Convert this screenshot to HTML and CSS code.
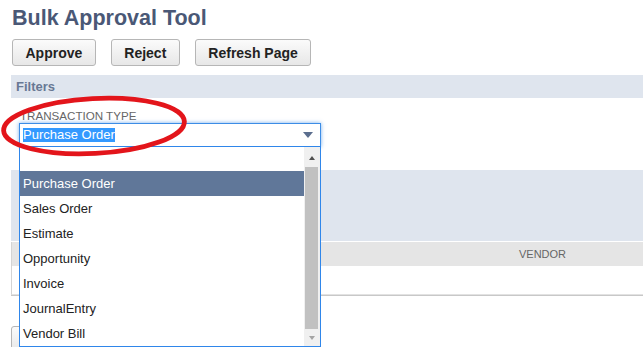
FILE: index.html
```html
<!DOCTYPE html>
<html lang="en">
<head>
<meta charset="utf-8">
<title>Bulk Approval Tool</title>
<link rel="stylesheet" href="styles.css">
</head>
<body>
<div class="page">
  <h1 class="title">Bulk Approval Tool</h1>
  <div class="actions">
    <button class="btn">Approve</button>
    <button class="btn">Reject</button>
    <button class="btn">Refresh Page</button>
  </div>
  <div class="section-bar">Filters</div>
  <div class="filters">
    <div class="field">
      <label class="field-label">Transaction Type</label>
      <div class="select">
        <span class="select-value">Purchase Order</span>
        <span class="select-arrow"></span>
        <div class="dropdown">
          <div class="options">
            <div class="option blank"></div>
            <div class="option active">Purchase Order</div>
            <div class="option">Sales Order</div>
            <div class="option">Estimate</div>
            <div class="option">Opportunity</div>
            <div class="option">Invoice</div>
            <div class="option">JournalEntry</div>
            <div class="option">Vendor Bill</div>
          </div>
          <div class="scrollbar">
            <div class="sb-btn sb-up"></div>
            <div class="sb-thumb"></div>
            <div class="sb-btn sb-down"></div>
          </div>
        </div>
      </div>
    </div>
  </div>
  <div class="sublist-bar"></div>
  <div class="table">
    <div class="thead">
      <div class="th th-vendor">VENDOR</div>
    </div>
    <div class="trow"></div>
  </div>
  <div class="bottom-actions">
    <button class="btn btn-hidden-label" aria-label="Approve"></button>
  </div>
</div>
<svg class="annotation" width="643" height="347" viewBox="0 0 643 347">
  <ellipse cx="94" cy="126" rx="90.5" ry="27.5" transform="rotate(-3 94 126)" fill="none" stroke="#e3151b" stroke-width="4.8"/>
</svg>
</body>
</html>
```

FILE: styles.css
```css
* { box-sizing: border-box; }

body {
  margin: 0;
  font-family: "Liberation Sans", Arial, sans-serif;
  color: #222;
  background: #fff;
  overflow: hidden;
}

.page {
  padding-left: 11px;
}

.title {
  margin: 6px 0 0 1px;
  font-size: 21.5px;
  line-height: 24px;
  font-weight: bold;
  color: #4a5876;
}

.actions {
  display: flex;
  gap: 15px;
  margin-top: 9px;
  padding-left: 1px;
}

.btn {
  height: 27px;
  padding: 0 12.5px;
  font-family: "Liberation Sans", Arial, sans-serif;
  font-size: 14px;
  font-weight: bold;
  color: #222;
  border: 1px solid #b6b6b6;
  border-radius: 3px;
  background: linear-gradient(#fbfbfb, #e7e7e7);
}

.btn-hidden-label {
  width: 84px;
}

.section-bar {
  margin-top: 9px;
  height: 23px;
  line-height: 23px;
  padding-left: 5px;
  background: #dfe5ee;
  font-size: 13px;
  font-weight: bold;
  color: #687894;
}

.filters {
  height: 72px;
  padding: 11px 0 0 8px;
}

.field-label {
  display: block;
  padding-left: 1px;
  font-size: 11.6px;
  line-height: 14px;
  color: #666;
  text-transform: uppercase;
}

.select {
  position: relative;
  width: 302px;
  height: 24px;
  display: flex;
  align-items: center;
  padding-left: 3px;
  border: 1px solid #3d8de6;
  box-shadow: 0 0 4px rgba(61, 141, 230, 0.7);
  background: #fff;
}

.select-value {
  font-size: 13px;
  line-height: 14px;
  background: #3399ff;
  color: #fff;
}

.select-arrow {
  margin-left: auto;
  margin-right: 7px;
  width: 0;
  height: 0;
  border-left: 5.5px solid transparent;
  border-right: 5.5px solid transparent;
  border-top: 6px solid #5b6e8e;
}

.dropdown {
  position: absolute;
  left: -1px;
  top: 22px;
  width: 302px;
  height: 201px;
  display: flex;
  border: 1px solid #2f86ea;
  background: #fff;
  z-index: 5;
}

.options {
  flex: 1;
}

.option {
  height: 25px;
  line-height: 25px;
  padding-left: 3px;
  font-size: 13px;
  color: #222;
  white-space: nowrap;
}

.option.blank {
  height: 24px;
}

.option.active {
  background: #607799;
  color: #fff;
}

.scrollbar {
  width: 16px;
  display: flex;
  flex-direction: column;
  background: #f0f0f0;
}

.sb-btn {
  display: flex;
  align-items: center;
  justify-content: center;
}

.sb-up {
  height: 20px;
}

.sb-up::after {
  content: "";
  border-left: 3.5px solid transparent;
  border-right: 3.5px solid transparent;
  border-bottom: 4px solid #505050;
  margin-top: 1px;
}

.sb-thumb {
  height: 162px;
  margin: 0 2px 0 1px;
  background: #c1c1c1;
}

.sb-down {
  flex: 1;
}

.sb-down::after {
  content: "";
  border-left: 3.5px solid transparent;
  border-right: 3.5px solid transparent;
  border-top: 4px solid #a3a3a3;
}

.sublist-bar {
  height: 71px;
  background: #dfe5ee;
}

.table {
  margin-top: 1px;
  border-left: 1px solid #d4d4d4;
  border-bottom: 1px solid #e2e2e2;
  box-shadow: 0 1px 0 #c8c8c8;
}

.thead {
  height: 24px;
  display: flex;
  background: #e5e5e5;
  font-size: 11px;
  line-height: 24px;
  color: #666;
}

.th-vendor {
  margin-left: 507px;
}

.trow {
  height: 28px;
}

.bottom-actions {
  margin-top: 31px;
  display: flex;
}

.annotation {
  position: absolute;
  left: 0;
  top: 0;
  pointer-events: none;
  z-index: 10;
}
```
